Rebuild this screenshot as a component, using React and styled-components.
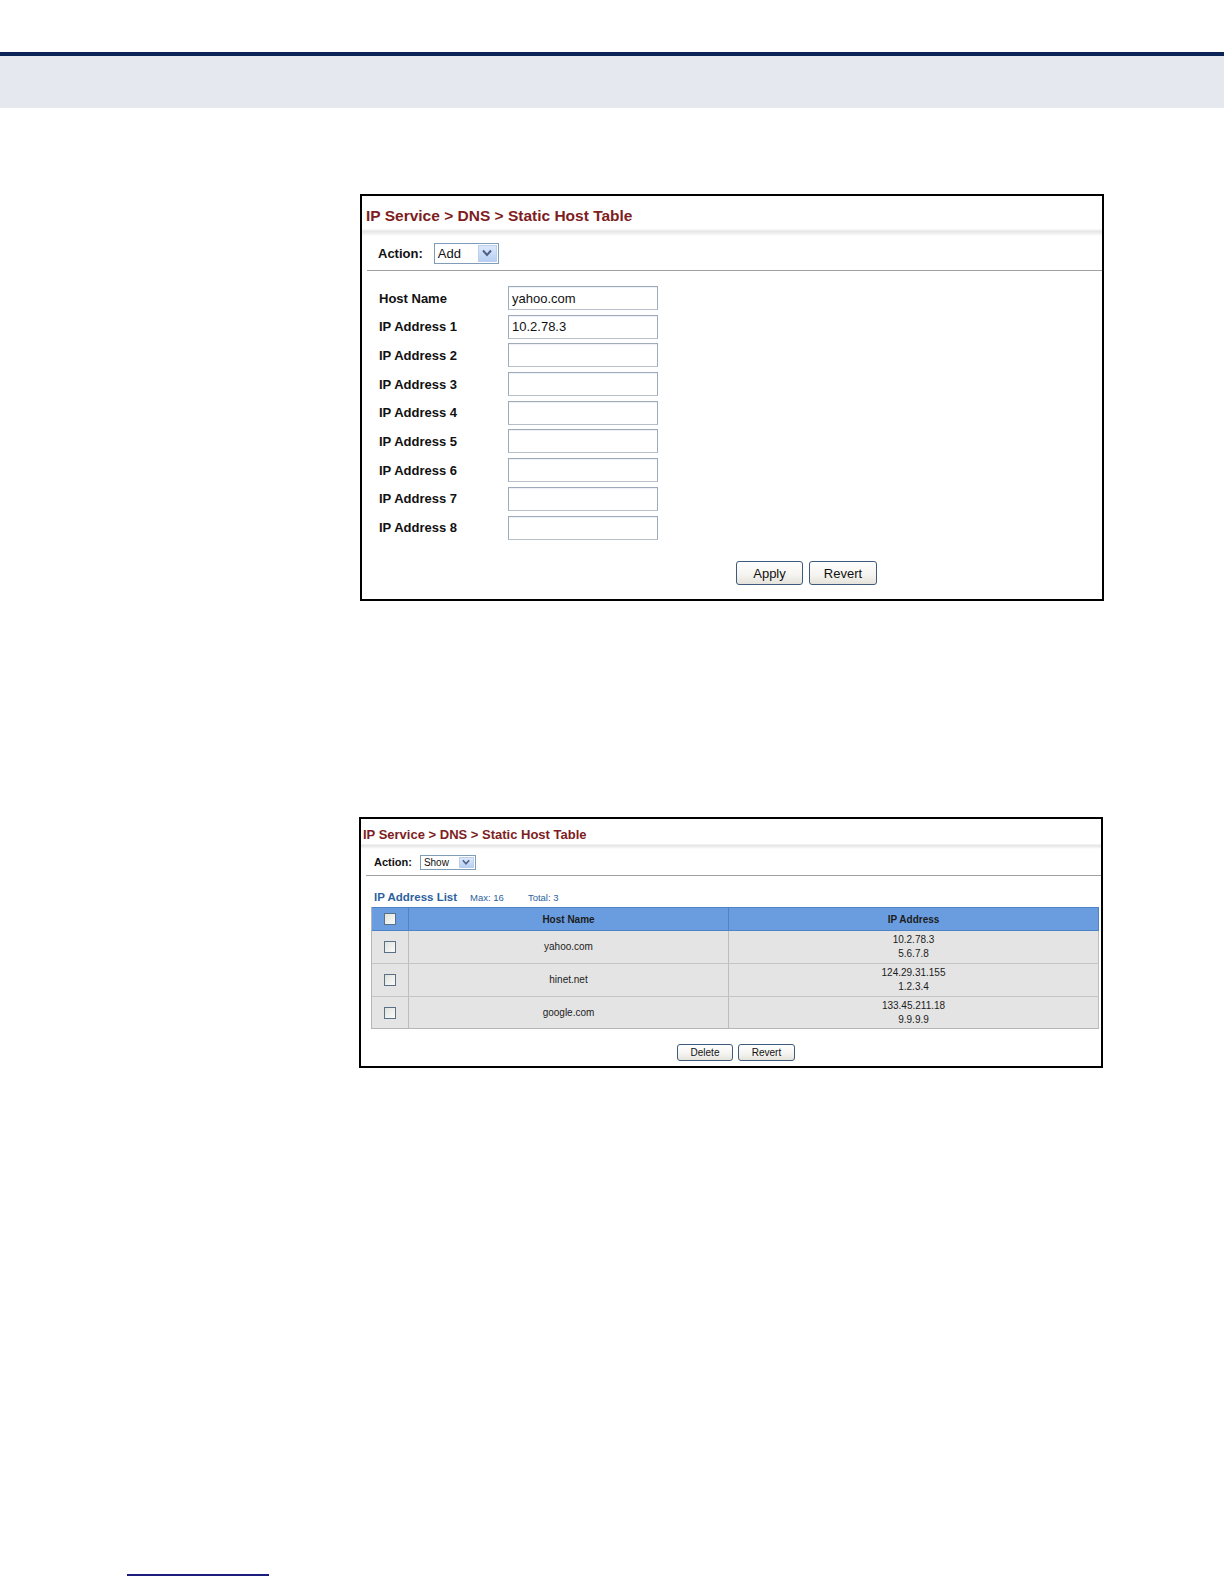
import React from "react";
import styled, { createGlobalStyle } from "styled-components";

const GlobalStyle = createGlobalStyle`
  html, body {
    margin: 0;
    padding: 0;
    background: #ffffff;
    font-family: "Liberation Sans", Arial, sans-serif;
  }
`;

const Page = styled.div`
  width: 1224px;
  min-height: 1584px;
  display: flex;
  flex-direction: column;
`;

const HeaderBand = styled.div`
  margin-top: 52px;
  height: 52px;
  border-top: 4px solid #0b2458;
  background: #e5e8ef;
`;

const Panel = styled.div`
  box-sizing: border-box;
  width: 744px;
  margin-left: ${(p) => p.left}px;
  margin-top: ${(p) => p.top}px;
  height: ${(p) => p.height}px;
  border: 2px solid #000;
  background: #fff;
  display: flex;
  flex-direction: column;
`;

const Title = styled.div`
  height: ${(p) => p.h}px;
  padding-left: ${(p) => p.pad}px;
  display: flex;
  align-items: center;
  font-size: ${(p) => p.size}px;
  font-weight: bold;
  color: #7e1d22;
  background: linear-gradient(
    to bottom,
    #ffffff 0%,
    #ffffff 82%,
    #e6e6e6 88%,
    #f0f0f0 94%,
    #ffffff 100%
  );
`;

const ActionRow = styled.div`
  height: ${(p) => p.h}px;
  display: flex;
  align-items: center;
  padding-left: ${(p) => p.pad}px;
  gap: ${(p) => p.gap}px;
  margin-left: 5px;
  border-bottom: 1px solid #a0a0a0;
`;

const ActionLabel = styled.span`
  font-size: ${(p) => p.size}px;
  font-weight: bold;
  color: #111;
`;

const Select = styled.div`
  box-sizing: border-box;
  width: ${(p) => p.w}px;
  height: ${(p) => p.h}px;
  border: 1px solid #7f9db9;
  background: #fff;
  display: flex;
  align-items: stretch;
  justify-content: space-between;
  font-size: ${(p) => p.size}px;
  color: #111;
`;

const SelectText = styled.span`
  display: flex;
  align-items: center;
  padding-left: 3px;
`;

const SelectArrow = styled.span`
  width: ${(p) => p.w}px;
  margin: 1px;
  display: flex;
  align-items: center;
  justify-content: center;
  background: linear-gradient(to bottom, #dce8fb, #b9cff3);
  border: 1px solid #bcd0ee;
`;

const Chevron = ({ size }) => (
  <svg width={size} height={size * 0.8} viewBox="0 0 10 8">
    <path d="M1 1.5 L5 6 L9 1.5" fill="none" stroke="#4d6185" strokeWidth="2" />
  </svg>
);

const Form = styled.div`
  display: flex;
  flex-direction: column;
  padding: 15px 0 0 17px;
`;

const FormRow = styled.div`
  height: 28.7px;
  display: flex;
  align-items: flex-start;
`;

const FieldLabel = styled.span`
  width: 129px;
  height: 24px;
  display: flex;
  align-items: center;
  font-size: 13px;
  font-weight: bold;
  color: #111;
`;

const TextField = styled.div`
  box-sizing: border-box;
  width: 150px;
  height: 24px;
  border: 1px solid #9fabba;
  border-bottom-color: #b8c0ca;
  box-shadow: inset 0 1px 0 #eef1f5;
  padding-left: 3px;
  display: flex;
  align-items: center;
  font-size: 13px;
  color: #111;
`;

const ButtonBar = styled.div`
  display: flex;
  gap: ${(p) => p.gap}px;
  padding-left: ${(p) => p.pad}px;
  margin-top: ${(p) => p.top}px;
`;

const Button = styled.div`
  box-sizing: border-box;
  width: ${(p) => p.w}px;
  height: ${(p) => p.h}px;
  border: 1px solid #3e5b7e;
  border-radius: 3px;
  background: linear-gradient(to bottom, #ffffff 0%, #f4f3ef 60%, #e4e2da 100%);
  display: flex;
  align-items: center;
  justify-content: center;
  font-size: ${(p) => p.size}px;
  color: #111;
`;

const ListHeading = styled.div`
  display: flex;
  align-items: baseline;
  padding: 15px 0 4px 13px;
  color: #2d5f9e;
`;

const ListTitle = styled.span`
  font-size: 11.5px;
  font-weight: bold;
  margin-right: 13px;
`;

const ListMeta = styled.span`
  font-size: 9.5px;
  margin-right: ${(p) => p.gap || 0}px;
`;

const Table = styled.div`
  margin-left: 10px;
  width: 727px;
  display: grid;
  grid-template-columns: 37px 320px 370px;
  border-left: 1px solid #b5b5b5;
  border-bottom: 1px solid #b5b5b5;
`;

const HeadCell = styled.div`
  height: 24px;
  box-sizing: border-box;
  background: #6a9de0;
  border-top: 1px solid #4f83c8;
  border-right: 1px solid #4f83c8;
  border-bottom: 1px solid #4f83c8;
  display: flex;
  align-items: center;
  justify-content: center;
  font-size: 10px;
  font-weight: bold;
  color: #1c1c1c;
`;

const Cell = styled.div`
  height: ${(p) => p.h}px;
  box-sizing: border-box;
  background: #e4e4e4;
  border-right: 1px solid #bdbdbd;
  border-top: ${(p) => (p.first ? "none" : "1px solid #c4c4c4")};
  display: flex;
  flex-direction: column;
  align-items: center;
  justify-content: center;
  font-size: 10px;
  line-height: 14px;
  color: #1c1c1c;
`;

const Check = styled.span`
  box-sizing: border-box;
  width: 12px;
  height: 12px;
  border: 1px solid #5a6f88;
  background: linear-gradient(135deg, #e2e2dc, #fafafa);
`;

const FooterRule = styled.div`
  margin: 506px 0 0 127px;
  width: 142px;
  height: 2px;
  background: #1b1c7e;
`;

const hosts = [
  { name: "yahoo.com", ips: ["10.2.78.3", "5.6.7.8"], h: 32 },
  { name: "hinet.net", ips: ["124.29.31.155", "1.2.3.4"], h: 33 },
  { name: "google.com", ips: ["133.45.211.18", "9.9.9.9"], h: 32 },
];

const fields = [
  ["Host Name", "yahoo.com"],
  ["IP Address 1", "10.2.78.3"],
  ["IP Address 2", ""],
  ["IP Address 3", ""],
  ["IP Address 4", ""],
  ["IP Address 5", ""],
  ["IP Address 6", ""],
  ["IP Address 7", ""],
  ["IP Address 8", ""],
];

export default function App() {
  return (
    <Page>
      <GlobalStyle />
      <HeaderBand />

      <Panel left={360} top={86} height={407}>
        <Title h={40} pad={4} size={15.5}>
          IP Service &gt; DNS &gt; Static Host Table
        </Title>
        <ActionRow h={34} pad={11} gap={11}>
          <ActionLabel size={13}>Action:</ActionLabel>
          <Select w={65} h={21} size={13}>
            <SelectText>Add</SelectText>
            <SelectArrow w={17}>
              <Chevron size={10} />
            </SelectArrow>
          </Select>
        </ActionRow>
        <Form>
          {fields.map(([label, value]) => (
            <FormRow key={label}>
              <FieldLabel>{label}</FieldLabel>
              <TextField>{value}</TextField>
            </FormRow>
          ))}
        </Form>
        <ButtonBar gap={6} pad={374} top={17}>
          <Button w={67} h={24} size={13}>Apply</Button>
          <Button w={68} h={24} size={13}>Revert</Button>
        </ButtonBar>
      </Panel>

      <Panel left={359} top={216} height={251}>
        <Title h={30} pad={2} size={13}>
          IP Service &gt; DNS &gt; Static Host Table
        </Title>
        <ActionRow h={26} pad={8} gap={8}>
          <ActionLabel size={11}>Action:</ActionLabel>
          <Select w={56} h={15} size={10}>
            <SelectText>Show</SelectText>
            <SelectArrow w={13}>
              <Chevron size={8} />
            </SelectArrow>
          </Select>
        </ActionRow>
        <ListHeading>
          <ListTitle>IP Address List</ListTitle>
          <ListMeta gap={24}>Max: 16</ListMeta>
          <ListMeta>Total: 3</ListMeta>
        </ListHeading>
        <Table>
          <HeadCell>
            <Check />
          </HeadCell>
          <HeadCell>Host Name</HeadCell>
          <HeadCell>IP Address</HeadCell>
          {hosts.map((h, i) => (
            <React.Fragment key={h.name}>
              <Cell h={h.h} first={i === 0}>
                <Check />
              </Cell>
              <Cell h={h.h} first={i === 0}>{h.name}</Cell>
              <Cell h={h.h} first={i === 0}>
                {h.ips.map((ip) => (
                  <span key={ip}>{ip}</span>
                ))}
              </Cell>
            </React.Fragment>
          ))}
        </Table>
        <ButtonBar gap={5} pad={316} top={15}>
          <Button w={56} h={17} size={10}>Delete</Button>
          <Button w={57} h={17} size={10}>Revert</Button>
        </ButtonBar>
      </Panel>

      <FooterRule />
    </Page>
  );
}
